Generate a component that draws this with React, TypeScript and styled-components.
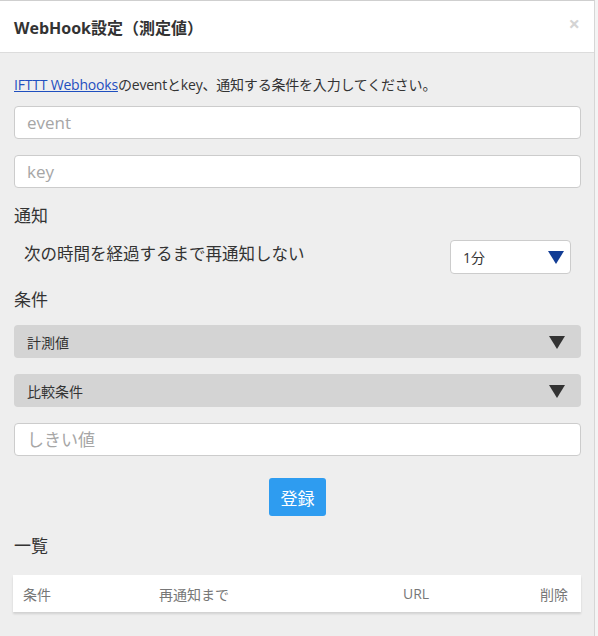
import React from "react";
import styled, { createGlobalStyle } from "styled-components";

const Global = createGlobalStyle`
  html, body { margin: 0; padding: 0; background: #f4f4f4; }
  body { font-family: "Open Sans", "Noto Sans CJK JP", sans-serif; color: #333; }
  * { box-sizing: border-box; }
`;

const Modal = styled.div`
  width: 595px;
  height: 636px;
  background: #eeeeee;
  border-top: 1px solid #cfcfcf;
  border-right: 1px solid #d6d6d6;
  display: flex;
  flex-direction: column;
`;

const Header = styled.div`
  height: 52px;
  background: #fff;
  border-bottom: 1px solid #dcdcdc;
  display: flex;
  align-items: center;
  justify-content: space-between;
  padding: 0 14px 0 14px;
`;

const Title = styled.h1`
  margin: 0;
  font-size: 16px;
  font-weight: 700;
  color: #333;
`;

const Close = styled.span`
  font-size: 20px;
  font-weight: 700;
  color: #d4d4d4;
  line-height: 1;
  margin-top: -6px;
`;

const Body = styled.div`
  padding: 22px 13px 0 14px;
  display: flex;
  flex-direction: column;
`;

const Intro = styled.p`
  margin: 0 0 11px;
  font-size: 14px;
  line-height: 20px;
  color: #333;
  letter-spacing: -0.2px;
`;

const Link = styled.a`
  color: #1f4fbf;
  text-decoration: underline;
`;

const TextInput = styled.input<{ $mb?: number }>`
  width: 100%;
  height: 33px;
  border: 1px solid #cccccc;
  border-radius: 4px;
  background: #fff;
  padding: 0 12px;
  font-family: "Open Sans", "Noto Sans CJK JP", sans-serif;
  font-size: 17px;
  color: #333;
  margin-bottom: ${(p) => p.$mb ?? 16}px;
  &::placeholder { color: #a6a6a6; }
`;

const SectionTitle = styled.div<{ $mb?: number }>`
  font-size: 17px;
  line-height: 24px;
  color: #333;
  margin-bottom: ${(p) => p.$mb ?? 0}px;
`;

const NotifyRow = styled.div`
  display: flex;
  align-items: center;
  justify-content: space-between;
  padding: 0 10px 0 10px;
  margin: 12px 0 14px;
`;

const NotifyText = styled.span`
  font-size: 16.5px;
  color: #333;
  margin-top: -8px;
`;

const SmallSelect = styled.div`
  width: 121px;
  height: 34px;
  background: #fff;
  border: 1px solid #cccccc;
  border-radius: 4px;
  display: flex;
  align-items: center;
  justify-content: space-between;
  padding: 0 6px 0 12px;
  font-size: 14px;
  color: #333;
`;

const Select = styled.div`
  width: 100%;
  height: 33px;
  background: #d4d4d4;
  border-radius: 4px;
  display: flex;
  align-items: center;
  justify-content: space-between;
  padding: 0 16px 0 13px;
  font-size: 14px;
  color: #333;
  margin-bottom: 16px;
`;

const Tri = ({ color }: { color: string }) => (
  <svg width="16" height="14" viewBox="0 0 16 14">
    <path d="M0 1 H16 L8 14 Z" fill={color} />
  </svg>
);

const ButtonRow = styled.div`
  display: flex;
  justify-content: center;
  margin: 22px 0 18px;
`;

const Button = styled.button`
  width: 57px;
  height: 38px;
  background: #2e9cf0;
  border: none;
  border-radius: 3px;
  color: #fff;
  font-family: "Open Sans", "Noto Sans CJK JP", sans-serif;
  font-size: 17px;
  padding: 0;
`;

const Table = styled.div`
  margin-top: 17px;
  background: #fff;
  height: 37px;
  display: grid;
  grid-template-columns: 136px 244px 1fr auto;
  align-items: center;
  padding: 0 13px 0 10px;
  box-shadow: 0 2px 2px rgba(0, 0, 0, 0.12);
  margin-left: -1px;
`;

const Th = styled.span`
  font-size: 14px;
  color: #777;
`;

export default function App() {
  return (
    <>
      <Global />
      <Modal>
        <Header>
          <Title>WebHook設定（測定値）</Title>
          <Close>×</Close>
        </Header>
        <Body>
          <Intro>
            <Link href="#">IFTTT Webhooks</Link>のeventとkey、通知する条件を入力してください。
          </Intro>
          <TextInput placeholder="event" />
          <TextInput placeholder="key" $mb={16} />
          <SectionTitle>通知</SectionTitle>
          <NotifyRow>
            <NotifyText>次の時間を経過するまで再通知しない</NotifyText>
            <SmallSelect>
              1分
              <Tri color="#123d95" />
            </SmallSelect>
          </NotifyRow>
          <SectionTitle $mb={13}>条件</SectionTitle>
          <Select>
            計測値
            <Tri color="#333" />
          </Select>
          <Select>
            比較条件
            <Tri color="#333" />
          </Select>
          <TextInput placeholder="しきい値" $mb={0} />
          <ButtonRow>
            <Button>登録</Button>
          </ButtonRow>
          <SectionTitle>一覧</SectionTitle>
          <Table>
            <Th>条件</Th>
            <Th>再通知まで</Th>
            <Th>URL</Th>
            <Th>削除</Th>
          </Table>
        </Body>
      </Modal>
    </>
  );
}
